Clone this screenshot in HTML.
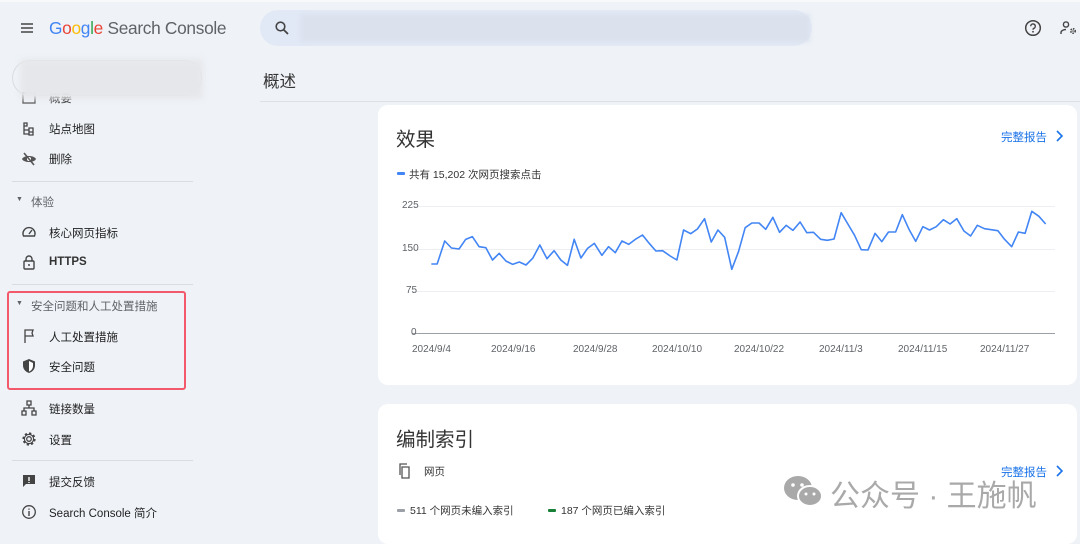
<!DOCTYPE html>
<html><head><meta charset="utf-8"><style>
*{margin:0;padding:0;box-sizing:border-box}
body{width:1080px;height:534px;overflow:hidden;background:#eff3f8;font-family:"Liberation Sans","Noto Sans CJK SC",sans-serif;color:#1f1f1f;position:relative}
.a{position:absolute;white-space:nowrap}
.nav{font-size:11.5px;color:#1f1f1f}
.sec{font-size:11.5px;color:#5f6368}
.ic{position:absolute;width:16px;height:16px}
.card{position:absolute;background:#fff;border-radius:10px}
.ax{font-size:10px;color:#5f6368;position:absolute;font-family:"Liberation Sans",sans-serif}
.blue{color:#1a73e8;font-size:11.5px}
</style></head><body>
<div class="a" style="left:0;top:0;width:1080px;height:2px;background:#f8f9fb"></div>
<svg class="ic" style="left:19px;top:20px" viewBox="0 0 16 16"><path d="M2 4h12M2 8h12M2 12h12" stroke="#444" stroke-width="1.6"/></svg>
<div class="a" style="left:49px;top:18px;font-size:17.3px;letter-spacing:-0.3px"><span style="color:#4285f4">G</span><span style="color:#ea4335">o</span><span style="color:#fbbc05">o</span><span style="color:#4285f4">g</span><span style="color:#34a853">l</span><span style="color:#ea4335">e</span> <span style="color:#5f6368">Search Console</span></div>
<div class="a" style="left:260px;top:10px;width:552px;height:36px;background:#e2e9f6;border-radius:18px"></div>
<div class="a" style="left:300px;top:14px;width:510px;height:28px;background:#dbe2ee;filter:blur(2px)"></div>
<svg class="ic" style="left:274px;top:20px" viewBox="0 0 16 16"><circle cx="6.5" cy="6.5" r="4.3" fill="none" stroke="#444" stroke-width="1.6"/><path d="M9.7 9.7L14 14" stroke="#444" stroke-width="1.8"/></svg>
<svg class="ic" style="left:1024px;top:19px;width:18px;height:18px" viewBox="0 0 18 18"><circle cx="9" cy="9" r="7.3" fill="none" stroke="#444" stroke-width="1.5"/><path d="M6.7 7.2a2.3 2.3 0 1 1 3 2.2c-.6.3-.7.7-.7 1.4" fill="none" stroke="#444" stroke-width="1.4"/><circle cx="9" cy="12.8" r=".9" fill="#444"/></svg>
<svg class="ic" style="left:1060px;top:20px;width:18px;height:16px" viewBox="0 0 18 16"><circle cx="6" cy="4.5" r="2.6" fill="none" stroke="#444" stroke-width="1.4"/><path d="M1 14v-1.5c0-2 3-3 5-3" fill="none" stroke="#444" stroke-width="1.4"/><circle cx="13" cy="11" r="2.2" fill="none" stroke="#444" stroke-width="1.6" stroke-dasharray="1.5 1"/><circle cx="13" cy="11" r=".8" fill="#444"/></svg>

<!-- sidebar -->
<svg class="ic" style="left:21px;top:90px" viewBox="0 0 16 16"><rect x="2" y="3" width="12" height="10" fill="none" stroke="#555" stroke-width="1.3"/></svg>
<div class="a nav" style="left:49px;top:90px">概要</div>
<div class="a" style="left:12px;top:60px;width:190px;height:36px;border:1px solid #dadce0;border-radius:18px"></div>
<div class="a" style="left:20px;top:59px;width:183px;height:40px;background:#e6e7ea;filter:blur(3px)"></div>
<svg class="ic" style="left:21px;top:121px" viewBox="0 0 16 16"><path d="M3 2h3v3H3zM3 5v8h5M3 9h5M8 7h4v4H8zM8 11h4v3H8z" fill="none" stroke="#444" stroke-width="1.3"/></svg>
<div class="a nav" style="left:49px;top:121px">站点地图</div>
<svg class="ic" style="left:21px;top:151px" viewBox="0 0 16 16"><path d="M1 8c2-4 12-4 14 0c-2 4-12 4-14 0z" fill="#555"/><circle cx="8" cy="8" r="2" fill="#fff"/><path d="M3 2l10 12" stroke="#555" stroke-width="1.6"/></svg>
<div class="a nav" style="left:49px;top:151px">删除</div>
<div class="a" style="left:12px;top:181px;width:181px;height:1px;background:#dadce0"></div>
<div class="a sec" style="left:16px;top:196px;font-size:7px">▼</div>
<div class="a sec" style="left:31px;top:194px">体验</div>
<svg class="ic" style="left:21px;top:224px" viewBox="0 0 16 16"><path d="M2.5 12a6 6 0 1 1 11 0z" fill="none" stroke="#444" stroke-width="1.4"/><path d="M8 10l3-4" stroke="#444" stroke-width="1.4"/></svg>
<div class="a nav" style="left:49px;top:225px">核心网页指标</div>
<svg class="ic" style="left:21px;top:254px" viewBox="0 0 16 16"><rect x="3" y="7" width="10" height="8" rx="1" fill="none" stroke="#444" stroke-width="1.4"/><path d="M5 7V5a3 3 0 0 1 6 0v2" fill="none" stroke="#444" stroke-width="1.4"/><circle cx="8" cy="11" r="1" fill="#444"/></svg>
<div class="a nav" style="left:49px;top:256px;font-weight:bold;color:#333">HTTPS</div>
<div class="a" style="left:12px;top:284px;width:181px;height:1px;background:#dadce0"></div>
<div class="a" style="left:7px;top:291px;width:179px;height:99px;border:2px solid #f25a6c;border-radius:3px"></div>
<div class="a sec" style="left:16px;top:300px;font-size:7px">▼</div>
<div class="a sec" style="left:31px;top:298px">安全问题和人工处置措施</div>
<svg class="ic" style="left:21px;top:328px" viewBox="0 0 16 16"><path d="M4 15V2h8l-1 3 1 3H4" fill="none" stroke="#444" stroke-width="1.3"/></svg>
<div class="a nav" style="left:49px;top:329px">人工处置措施</div>
<svg class="ic" style="left:21px;top:358px" viewBox="0 0 16 16"><path d="M8 1l6 2.5v4c0 4-3 6.5-6 7.5c-3-1-6-3.5-6-7.5v-4z" fill="#444"/><path d="M8 3v10.5c2-.8 4-2.6 4-5.8V5z" fill="#fff"/></svg>
<div class="a nav" style="left:49px;top:359px">安全问题</div>
<svg class="ic" style="left:21px;top:400px" viewBox="0 0 16 16"><path d="M6 1h4v4H6zM1 11h4v4H1zM11 11h4v4h-4zM8 5v3M3 11V8h10v3" fill="none" stroke="#444" stroke-width="1.3"/></svg>
<div class="a nav" style="left:49px;top:401px">链接数量</div>
<svg class="ic" style="left:21px;top:431px" viewBox="0 0 16 16"><circle cx="8" cy="8" r="2.3" fill="none" stroke="#444" stroke-width="1.3"/><circle cx="8" cy="8" r="5.5" fill="none" stroke="#444" stroke-width="2.2" stroke-dasharray="2.2 2.1"/><circle cx="8" cy="8" r="4.6" fill="none" stroke="#444" stroke-width="1.2"/></svg>
<div class="a nav" style="left:49px;top:432px">设置</div>
<div class="a" style="left:12px;top:460px;width:181px;height:1px;background:#dadce0"></div>
<svg class="ic" style="left:21px;top:473px" viewBox="0 0 16 16"><path d="M2 2h12v9H5l-3 3z" fill="#444"/><path d="M8 4v4M8 9v1" stroke="#fff" stroke-width="1.4"/></svg>
<div class="a nav" style="left:49px;top:474px">提交反馈</div>
<svg class="ic" style="left:21px;top:504px" viewBox="0 0 16 16"><circle cx="8" cy="8" r="6.3" fill="none" stroke="#444" stroke-width="1.3"/><path d="M8 7v5M8 4.5v1.3" stroke="#444" stroke-width="1.4"/></svg>
<div class="a nav" style="left:49px;top:505px">Search Console 简介</div>

<!-- main -->
<div class="a" style="left:263px;top:68px;font-size:16.5px;color:#333">概述</div>
<div class="a" style="left:260px;top:101px;width:820px;height:1px;background:#dde1e6"></div>

<div class="card" style="left:378px;top:105px;width:699px;height:280px"></div>
<div class="a" style="left:396px;top:123px;font-size:19.5px;color:#333">效果</div>
<div class="a blue" style="left:1001px;top:129px">完整报告</div>
<svg class="ic" style="left:1052px;top:128px" viewBox="0 0 16 16"><path d="M5 3l5 5-5 5" fill="none" stroke="#1a73e8" stroke-width="1.6"/></svg>
<div class="a" style="left:397px;top:172px;width:8px;height:3px;background:#4285f4;border-radius:1px"></div>
<div class="a" style="left:409px;top:167px;font-size:10.5px;color:#333">共有 15,202 次网页搜索点击</div>
<div class="a" style="left:412px;top:206px;width:643px;height:1px;background:#eceef1"></div>
<div class="a" style="left:412px;top:249px;width:643px;height:1px;background:#eceef1"></div>
<div class="a" style="left:412px;top:291px;width:643px;height:1px;background:#eceef1"></div>
<div class="a" style="left:412px;top:333px;width:643px;height:1px;background:#9aa0a6"></div>
<div class="ax" style="left:402px;top:200px">225</div>
<div class="ax" style="left:402px;top:243px">150</div>
<div class="ax" style="left:406px;top:285px">75</div>
<div class="ax" style="left:411px;top:327px">0</div>
<div class="ax" style="left:412px;top:344px">2024/9/4</div>
<div class="ax" style="left:491px;top:344px">2024/9/16</div>
<div class="ax" style="left:573px;top:344px">2024/9/28</div>
<div class="ax" style="left:652px;top:344px">2024/10/10</div>
<div class="ax" style="left:734px;top:344px">2024/10/22</div>
<div class="ax" style="left:819px;top:344px">2024/11/3</div>
<div class="ax" style="left:898px;top:344px">2024/11/15</div>
<div class="ax" style="left:980px;top:344px">2024/11/27</div>
<svg class="a" style="left:380px;top:180px" width="700" height="180" viewBox="0 0 1568 540" preserveAspectRatio="none"><polyline fill="none" stroke="#4285f4" stroke-width="1.6" vector-effect="non-scaling-stroke" stroke-linejoin="round" points="115,252 128,252 145,183 160,204 177,207 192,178 207,170 222,200 237,203 252,240 267,220 282,243 297,253 312,246 327,255 342,235 358,195 374,236 390,212 405,240 420,256 435,178 450,234 465,205 480,190 497,226 512,200 527,218 542,183 557,193 572,178 588,165 603,190 618,213 633,212 650,228 665,240 680,150 696,161 711,147 727,116 742,186 757,150 772,172 788,268 803,215 818,143 833,129 849,129 864,148 880,112 895,157 910,136 925,151 941,126 956,158 971,157 987,178 1002,181 1017,177 1033,98 1048,132 1063,166 1078,209 1093,210 1109,160 1124,185 1139,156 1155,156 1170,104 1185,148 1200,184 1216,140 1231,150 1246,140 1262,119 1277,132 1292,116 1308,153 1323,168 1338,136 1354,146 1369,149 1384,152 1399,178 1415,200 1430,156 1445,160 1460,94 1476,109 1491,132"/></svg>

<div class="card" style="left:378px;top:404px;width:699px;height:140px"></div>
<div class="a" style="left:396px;top:423px;font-size:19.5px;color:#333">编制索引</div>
<svg class="ic" style="left:397px;top:463px" viewBox="0 0 16 16"><path d="M5 4h7v11H5zM3 12V1h7" fill="none" stroke="#555" stroke-width="1.3"/></svg>
<div class="a" style="left:424px;top:464px;font-size:10.5px;color:#333">网页</div>
<div class="a blue" style="left:1001px;top:464px">完整报告</div>
<svg class="ic" style="left:1052px;top:463px" viewBox="0 0 16 16"><path d="M5 3l5 5-5 5" fill="none" stroke="#1a73e8" stroke-width="1.6"/></svg>
<div class="a" style="left:397px;top:509px;width:8px;height:3px;background:#9aa0a6;border-radius:1px"></div>
<div class="a" style="left:410px;top:503px;font-size:10.5px;color:#333">511 个网页未编入索引</div>
<div class="a" style="left:548px;top:509px;width:8px;height:3px;background:#188038;border-radius:1px"></div>
<div class="a" style="left:561px;top:503px;font-size:10.5px;color:#333">187 个网页已编入索引</div>
<svg class="a" style="left:782px;top:474px" width="44" height="36" viewBox="0 0 44 36"><ellipse cx="16" cy="14" rx="14" ry="12" fill="#a9a9a9"/><ellipse cx="28" cy="22" rx="12" ry="10" fill="#a9a9a9" stroke="#fff" stroke-width="2"/><circle cx="11" cy="11" r="1.8" fill="#fff"/><circle cx="20" cy="11" r="1.8" fill="#fff"/><circle cx="24" cy="20" r="1.5" fill="#fff"/><circle cx="32" cy="20" r="1.5" fill="#fff"/></svg>
<div class="a" style="left:830px;top:471px;font-size:30px;color:#a9a9a9">公众号 · 王施帆</div>
</body></html>
